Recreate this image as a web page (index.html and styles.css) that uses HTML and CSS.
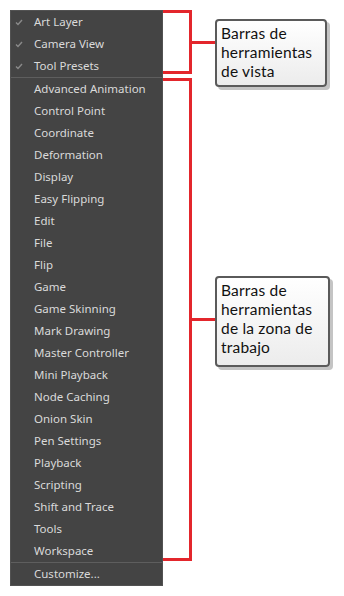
FILE: index.html
```html
<!DOCTYPE html>
<html>
<head>
<meta charset="utf-8">
<link rel="stylesheet" href="styles.css">
</head>
<body>
<div class="page">
  <div class="menu">
    <div class="item"><svg class="check" width="8" height="7" viewBox="0 0 8 7"><path d="M1 3.5 L3 5.5 L7 1" fill="none" stroke="#8a8a8a" stroke-width="1.4"/></svg>Art Layer</div>
    <div class="item"><svg class="check" width="8" height="7" viewBox="0 0 8 7"><path d="M1 3.5 L3 5.5 L7 1" fill="none" stroke="#8a8a8a" stroke-width="1.4"/></svg>Camera View</div>
    <div class="item"><svg class="check" width="8" height="7" viewBox="0 0 8 7"><path d="M1 3.5 L3 5.5 L7 1" fill="none" stroke="#8a8a8a" stroke-width="1.4"/></svg>Tool Presets</div>
    <div class="sep"></div>
    <div class="item">Advanced Animation</div>
    <div class="item">Control Point</div>
    <div class="item">Coordinate</div>
    <div class="item">Deformation</div>
    <div class="item">Display</div>
    <div class="item">Easy Flipping</div>
    <div class="item">Edit</div>
    <div class="item">File</div>
    <div class="item">Flip</div>
    <div class="item">Game</div>
    <div class="item">Game Skinning</div>
    <div class="item">Mark Drawing</div>
    <div class="item">Master Controller</div>
    <div class="item">Mini Playback</div>
    <div class="item">Node Caching</div>
    <div class="item">Onion Skin</div>
    <div class="item">Pen Settings</div>
    <div class="item">Playback</div>
    <div class="item">Scripting</div>
    <div class="item">Shift and Trace</div>
    <div class="item">Tools</div>
    <div class="item">Workspace</div>
    <div class="sep"></div>
    <div class="item">Customize...</div>
  </div>
  <div class="notes">
    <div class="note note-view">
      <div class="bracket bracket-view"></div>
      <div class="stem stem-view"></div>
      <div class="callout callout-view">Barras de herramientas de vista</div>
    </div>
    <div class="note note-work">
      <div class="bracket bracket-work"></div>
      <div class="stem stem-work"></div>
      <div class="callout callout-work">Barras de herramientas de la zona de trabajo</div>
    </div>
  </div>
</div>
</body>
</html>
```

FILE: styles.css
```css
html, body {
  margin: 0;
  padding: 0;
  background: #ffffff;
}

.page {
  display: flex;
  align-items: flex-start;
  padding: 10px 0 0 10px;
}

.menu {
  width: 151px;
  background: #444444;
  border: 1px solid #525252;
  font-family: "Noto Sans", "Open Sans", sans-serif;
  font-size: 11.5px;
  color: #dadada;
  display: flex;
  flex-direction: column;
}

.item {
  position: relative;
  height: 22px;
  line-height: 22px;
  padding-left: 23px;
  white-space: nowrap;
}

.check {
  position: absolute;
  left: 4px;
  top: 8px;
}

.sep {
  height: 1px;
  background: #5e5e5e;
}

.notes {
  display: flex;
  flex-direction: column;
}

.note {
  display: flex;
  align-items: flex-start;
}

.note-view {
  height: 64px;
}

.note-work {
  margin-top: 4px;
}

.bracket {
  box-sizing: border-box;
  width: 29px;
  border: 3px solid #e3262c;
  border-left: none;
}

.bracket-view {
  height: 64px;
}

.bracket-work {
  height: 483px;
}

.stem {
  width: 23px;
  height: 3px;
  background: #e3262c;
}

.stem-view {
  margin-top: 31px;
}

.stem-work {
  margin-top: 240px;
}

.callout {
  flex: none;
  box-sizing: border-box;
  border: 2px solid #5a5a5a;
  border-radius: 4px;
  background: linear-gradient(#ffffff, #ececec);
  box-shadow: 3px 3px 0 #c4c4c4;
  font-family: "Lato", sans-serif;
  font-size: 15.5px;
  letter-spacing: 0.2px;
  line-height: 19px;
  color: #111111;
  padding: 3px 4px 4px 4px;
}

.callout-view {
  width: 112px;
  height: 68px;
  margin-top: 9px;
}

.callout-work {
  width: 115px;
  height: 91px;
  margin-top: 198px;
}
```
